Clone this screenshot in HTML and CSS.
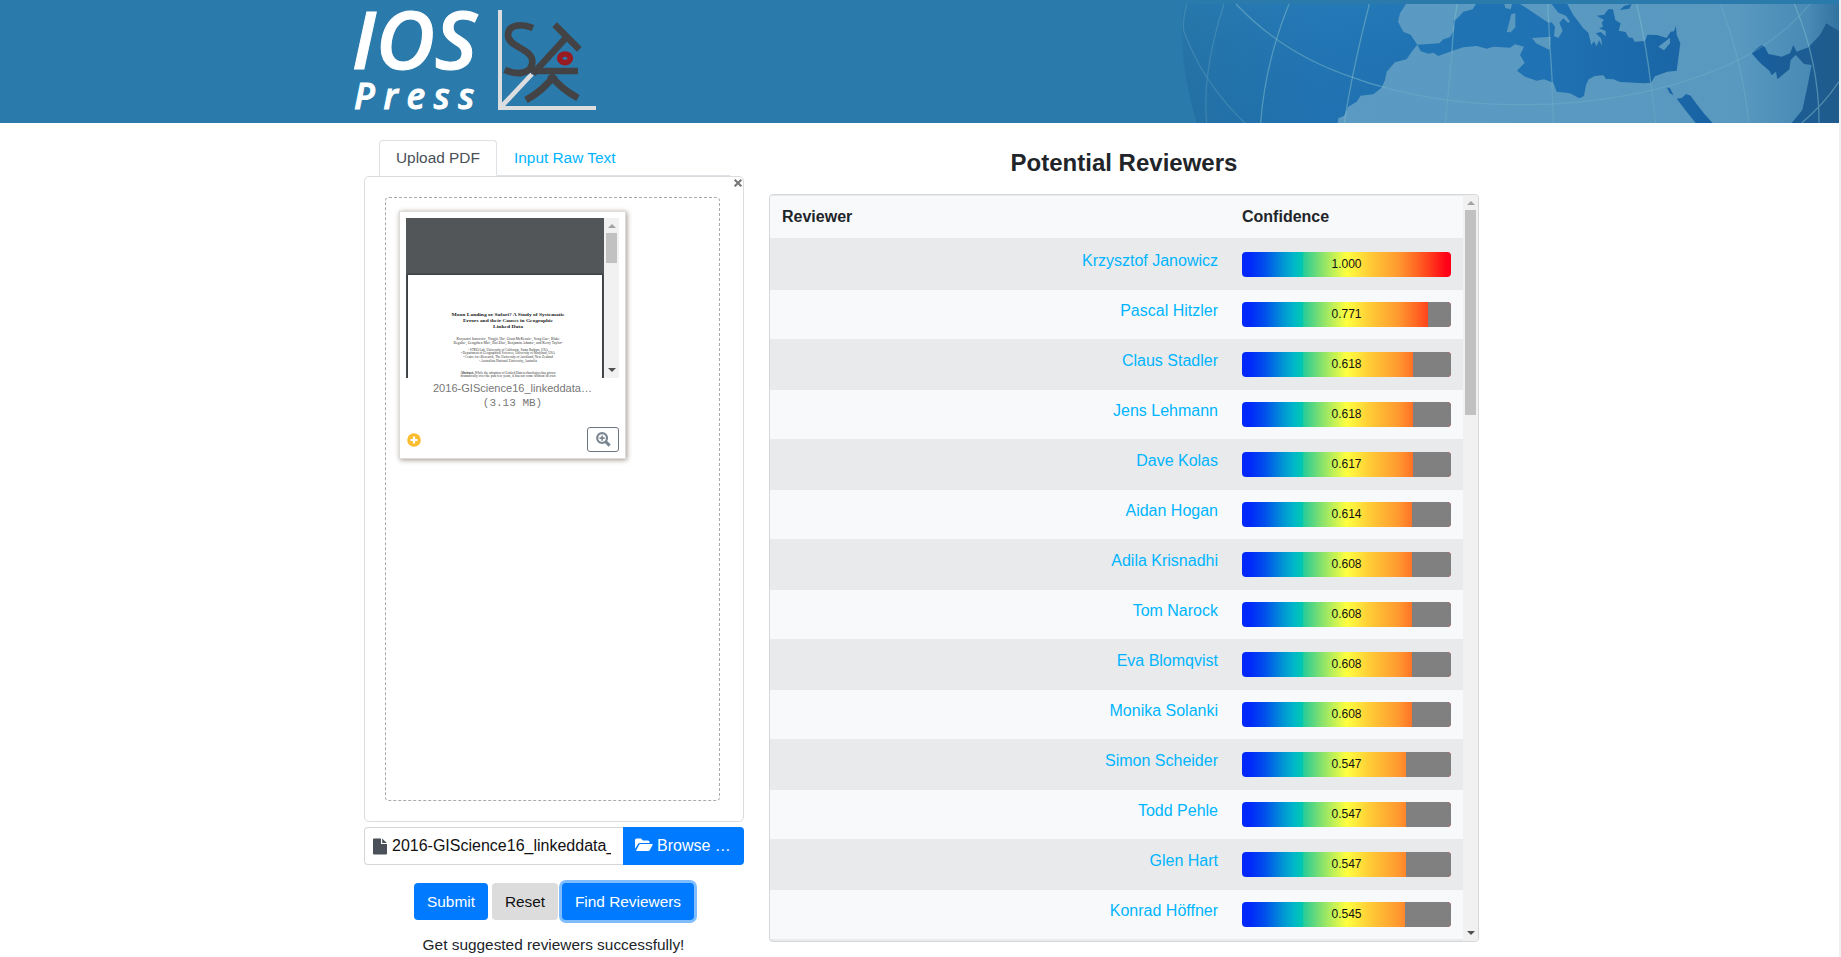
FILE: index.html
```
<!DOCTYPE html>
<html lang="en">
<head>
<meta charset="utf-8">
<title>Potential Reviewers</title>
<link rel="stylesheet" href="styles.css">
</head>
<body>
<div class="page">
<header class="banner">
  <svg class="logo" width="270" height="123" viewBox="0 0 810 369">
    <g class="brand">
      <text class="ios" x="35" y="206" textLength="376" lengthAdjust="spacingAndGlyphs">IOS</text>
      <text class="press" x="42" y="326" textLength="361" lengthAdjust="spacing">Press</text>
    </g>
    <g fill="none" stroke="#dcdddf" stroke-width="12">
      <path d="M480 30V324H768"/><path d="M484 320L576 222" stroke-width="14"/>
    </g>
    <g fill="none" stroke="#434345" stroke-width="20">
      <path d="M579 84C545 70 504 72 504 106C504 142 577 146 577 184C577 224 528 226 494 209"/>
      <path d="M644 74L718 148M680 111L579 221"/>
      <path d="M574 213H714"/><path stroke-width="21" d="M644 224C622 256 594 280 558 300M630 224C654 256 680 276 714 294"/>
    </g>
    <ellipse cx="675" cy="175" rx="16" ry="13" fill="none" stroke="#981b22" stroke-width="17"/>
  </svg>
  <svg class="map" width="657" height="123" viewBox="36 0 1971 369">
    <defs>
      <linearGradient id="sea" gradientUnits="userSpaceOnUse" x1="36" y1="0" x2="2007" y2="0">
        <stop offset="0" stop-color="#2774a5"/><stop offset=".09" stop-color="#2575ac"/><stop offset=".2" stop-color="#2376b3"/><stop offset=".55" stop-color="#1f72b3"/><stop offset=".87" stop-color="#175f9f"/><stop offset="1" stop-color="#205b8b"/>
      </linearGradient>
      <linearGradient id="land" gradientUnits="userSpaceOnUse" x1="500" y1="0" x2="2007" y2="0">
        <stop offset="0" stop-color="#5b9bc3"/><stop offset=".8" stop-color="#5999c0"/><stop offset=".94" stop-color="#488ab5"/><stop offset="1" stop-color="#32739f"/>
      </linearGradient>
      <linearGradient id="depth" x1="0" y1="0" x2="0" y2="1">
        <stop offset="0" stop-color="#2a85c3" stop-opacity=".2"/><stop offset="1" stop-color="#0b4f98" stop-opacity=".12"/>
      </linearGradient>
    </defs>
    <path fill="url(#sea)" d="M40 12H2007V369H80Q22 180 40 12Z"/>
    <path fill="url(#depth)" d="M40 12H2007V369H80Q22 180 40 12Z"/>
    <path fill="url(#land)" d="M708 12H2007V369H503L505 355L522 348L535 320L560 305L572 287L610 283L635 263L645 240L650 215L675 187L710 178L725 155L742 134L722 104L700 95L684 65L690 40Z"/>
    <path fill="url(#sea)" d="M742 134L808 130L820 118L840 112L852 90L850 62L862 55L880 35L908 28L918 12H1050L1075 28L1105 48L1135 68L1145 67L1155 80L1152 108L1165 114L1178 92L1168 68L1180 55L1194 68L1200 65L1188 47L1165 38L1145 12H1192L1210 45L1240 85L1255 98L1264 135L1272 124L1280 139L1287 121L1297 138L1293 115L1277 100L1292 96L1307 109L1307 93L1287 85L1299 80L1295 68L1302 60L1280 47L1302 44L1315 28L1329 28L1336 60L1352 70L1346 92L1367 96L1375 112L1388 114L1394 125L1425 123L1432 104L1462 105L1490 114L1502 95L1512 94L1518 78L1520 105L1531 130L1525 175L1520 212L1492 215L1455 229L1443 248L1425 250L1350 246L1330 238L1308 237L1300 226L1275 228L1256 238L1248 255L1242 288L1228 295L1200 280L1160 275L1150 248L1122 238L1100 242L1065 230L1041 212L1064 188L1050 165L1062 140L1035 133L1020 143L970 140L950 146L920 138L880 142L840 155L805 168L790 158L775 161L752 154Z"/>
    <g fill="url(#sea)">
      <path d="M1350 30L1362 18L1385 12L1378 26Z"/>
      <path d="M1490 262L1500 265L1511 286L1499 280Z"/>
      <path d="M1520 296L1535 294L1548 282L1562 287L1578 310L1604 343L1628 369H1577L1550 335Z"/>
      <path d="M1745 160L1758 148L1775 135L1785 142L1795 162L1835 170L1860 160L1870 135L1880 155L1915 142L1950 105L1969 70L1985 80L2007 92V369H1865L1897 330L1910 270L1925 195L1902 192L1877 165L1862 180L1858 208L1822 238L1818 215L1805 226L1798 212L1770 188Z"/>
    </g>
    <g fill="#5999c0">
      <path d="M1024 42L1036 40L1036 82L1022 97L1010 96L1017 70Z"/><path d="M1003 12H1026L1022 28L1006 24Z"/>
      <path d="M1086 114L1142 110L1139 150L1098 130Z"/><path d="M1465 140L1500 113L1500 130L1482 151Z"/>
    </g>
    <g fill="none" stroke="#82bccb" stroke-opacity=".5" stroke-width="4">
      <path stroke-opacity=".25" d="M50 12Q36 70 42 95Q100 250 225 369M162 12Q95 220 110 369"/>
      <path d="M357 12Q285 190 272 369M598 12Q545 220 523 369"/>
      <path d="M198 12C300 120 420 190 548 232Q595 250 645 263"/>
      <path stroke-opacity=".28" d="M645 263Q830 312 1020 314C1250 318 1500 280 1700 182Q1830 120 1920 12"/>
      <path d="M862 12Q848 80 846 160"/><path stroke-opacity=".25" d="M846 160L826 369M1146 250L1150 369M1442 248L1457 369"/>
      <path d="M1133 12Q1139 130 1147 250M1400 12Q1428 130 1442 248"/>
      <path stroke-opacity=".28" d="M1652 12Q1720 200 1736 369"/><path d="M1873 12Q1948 190 1947 369M1895 369Q1960 315 2007 245"/>
    </g>
  </svg>
</header>

<main class="content">
  <section class="upload">
    <nav class="tabs">
      <a class="tab tab-active">Upload PDF</a>
      <a class="tab">Input Raw Text</a>
    </nav>
    <div class="panel">
      <svg class="close" width="8" height="8" viewBox="0 0 7 7"><path d="M.6 .6L6.4 6.4M6.4 .6L.6 6.4" stroke="#777" stroke-width="1.8"/></svg>
      <div class="dropzone">
        <figure class="file">
          <div class="viewer">
            <div class="paper">
              <svg width="194" height="103" viewBox="0 0 194 103" text-anchor="middle">
                <g class="paper-title">
                  <text x="100" y="41" textLength="113" lengthAdjust="spacingAndGlyphs">Moon Landing or Safari? A Study of Systematic</text>
                  <text x="100" y="47" textLength="90" lengthAdjust="spacingAndGlyphs">Errors and their Causes in Geographic</text>
                  <text x="100" y="53" textLength="30" lengthAdjust="spacingAndGlyphs">Linked Data</text>
                </g>
                <g class="paper-text">
                  <text x="100" y="64.5" textLength="103" lengthAdjust="spacingAndGlyphs">Krzysztof Janowicz¹, Yingjie Hu², Grant McKenzie³, Song Gao¹, Blake</text>
                  <text x="100" y="68.5" textLength="109" lengthAdjust="spacingAndGlyphs">Regalia¹, Gengchen Mai¹, Rui Zhu¹, Benjamin Adams⁴, and Kerry Taylor⁵</text>
                  <text x="100" y="75.5" textLength="80" lengthAdjust="spacingAndGlyphs">¹ STKO Lab, University of California, Santa Barbara, USA</text>
                  <text x="100" y="79.2" textLength="94" lengthAdjust="spacingAndGlyphs">² Department of Geographical Sciences, University of Maryland, USA</text>
                  <text x="100" y="82.8" textLength="90" lengthAdjust="spacingAndGlyphs">³ Centre for eResearch, The University of Auckland, New Zealand</text>
                  <text x="100" y="86.5" textLength="58" lengthAdjust="spacingAndGlyphs">⁴ Australian National University, Australia</text>
                  <text x="100" y="98.5" textLength="95" lengthAdjust="spacingAndGlyphs"><tspan font-weight="bold">Abstract.</tspan> While the adoption of Linked Data technologies has grown</text>
                  <text x="100" y="102.3" textLength="95" lengthAdjust="spacingAndGlyphs">dramatically over the past few years, it has not come without its own</text>
                </g>
              </svg>
            </div>
            <div class="scrollbar"><i class="arrow up"></i><i class="thumb"></i><i class="arrow down"></i></div>
          </div>
          <figcaption class="caption">2016-GIScience16_linkeddata…</figcaption>
          <div class="size">(3.13 MB)</div>
          <div class="file-actions">
            <svg width="14" height="14" viewBox="0 0 14 14"><circle cx="7" cy="7" r="6.8" fill="#fdbb2f"/><path d="M7 3.4V10.6M3.4 7H10.6" stroke="#fff" stroke-width="2.2"/></svg>
            <span class="zoom"><svg width="15" height="15" viewBox="0 0 15 15" fill="none" stroke="#7a8590"><circle cx="6.1" cy="6.1" r="4.9" stroke-width="2.2"/><path d="M9.6 9.6L13.6 13.6" stroke-width="3"/><path d="M6.1 3.5V8.7M3.5 6.1H8.7" stroke-width="1.6"/></svg></span>
          </div>
        </figure>
      </div>
    </div>
    <div class="picker">
      <div class="filename">
        <svg width="14" height="17" viewBox="0 0 14 17" fill="#495057"><path d="M1 .5H8V6H14V15.5Q14 16.5 13 16.5H1Q0 16.5 0 15.5V1.5Q0 .5 1 .5ZM9.2 .5L13.8 5H9.2Z"/></svg>
        <span class="filename-text">2016-GIScience16_linkeddata_e</span>
      </div>
      <div class="browse">
        <svg width="18" height="14" viewBox="0 0 18 14" fill="#fff"><path d="M0 10.8V2Q0 .5 1.5 .5H6L8 2.5H13Q14.5 2.5 14.5 4V5H5Q3.6 5 3 6ZM1 13L4 7Q4.4 6 5.4 6H17Q18 6 17.6 7L15 11.8Q14.4 13 13.2 13Z"/></svg>
        <span>Browse …</span>
      </div>
    </div>
    <div class="buttons">
      <button class="btn">Submit</button>
      <button class="btn btn-reset">Reset</button>
      <button class="btn btn-find">Find Reviewers</button>
    </div>
    <p class="message">Get suggested reviewers successfully!</p>
  </section>

  <section class="results">
    <h1 class="title">Potential Reviewers</h1>
    <div class="table-card">
      <div class="table">
        <div class="head"><span>Reviewer</span><span class="head-conf">Confidence</span></div>
        <div id="rows"></div>
      </div>
      <div class="scrollbar tall"><i class="arrow up"></i><i class="thumb"></i><i class="arrow down"></i></div>
    </div>
  </section>
</main>
</div>
<script src="rows.js"></script>
</body>
</html>
```
FILE: rows.js
```
// name, confidence, filled width of the bar in px
const reviewers = [
  ["Krzysztof Janowicz", "1.000", 209], ["Pascal Hitzler", "0.771", 186],
  ["Claus Stadler", "0.618", 171], ["Jens Lehmann", "0.618", 171],
  ["Dave Kolas", "0.617", 171], ["Aidan Hogan", "0.614", 170],
  ["Adila Krisnadhi", "0.608", 170], ["Tom Narock", "0.608", 170],
  ["Eva Blomqvist", "0.608", 170], ["Monika Solanki", "0.608", 170],
  ["Simon Scheider", "0.547", 164], ["Todd Pehle", "0.547", 164],
  ["Glen Hart", "0.547", 164], ["Konrad Höffner", "0.545", 163]
];
document.getElementById("rows").innerHTML = reviewers.map(([name, score, width]) =>
  `<div class="row"><a class="name">${name}</a><div class="bar"><div class="rest" style="width:${209 - width}px"></div><span class="score">${score}</span></div></div>`
).join("");
```
FILE: styles.css
```
* { box-sizing: border-box; }
body { margin: 0; height: 957px; overflow: hidden; background: #f0f0f0; font-family: "Liberation Sans", Arial, sans-serif; font-size: 15.4px; line-height: 23px; color: #212529; }
.page { width: 1839px; height: 957px; background: #fff; }
.banner { height: 123px; background: #2a7aab; display: flex; justify-content: space-between; padding-left: 340px; }
.logo, .map { display: block; }
.brand { fill: #fff; font-family: "Open Sans", sans-serif; font-style: italic; font-weight: 600; stroke: #fff; stroke-width: 3; }
.ios { font-size: 238px; }
.press { font-size: 106px; }

.content { display: flex; align-items: flex-start; gap: 25px; padding-left: 364px; }
.upload { width: 380px; padding-top: 17px; }
.tabs { display: flex; margin: 0 14px 0 15px; height: 36px; border-bottom: 1px solid #dee2e6; }
.tab { height: 36px; padding: 5px 16px; border: 1px solid transparent; color: #00b5ff; white-space: nowrap; }
.tab-active { width: 118px; color: #495057; background: #fff; border-color: #dee2e6 #dee2e6 #fff; border-radius: 4px 4px 0 0; }
.panel { position: relative; height: 646px; border: 1px solid #dcdcdc; border-radius: 5px; padding: 20px 23px 20px 20px; }
.close { position: absolute; top: 2px; right: 1px; }
.dropzone { height: 604px; border: 1px dashed #aaa; border-radius: 4px; padding: 13px; }
.file { margin: 0; width: 227px; height: 248px; border: 1px solid #ddd; box-shadow: 1px 1px 5px 0 #a2958a; padding: 6px; display: flex; flex-direction: column; color: #777; font-size: 11.05px; text-align: center; background: #fff; }
.viewer { width: 213px; height: 160px; display: flex; background: #525659; flex: none; }
.paper { margin: 57px 2px 0; width: 194px; background: #fff; box-shadow: 0 0 2px 1px #34373a; clip-path: inset(-2px -2px 0); }
.paper svg { display: block; }
.paper-title { font: bold 4.8px "Liberation Serif", serif; fill: #222; }
.paper-text { font: 3.4px "Liberation Serif", serif; fill: #333; }
.scrollbar { width: 15px; background: #f1f1f1; display: flex; flex-direction: column; align-items: center; padding: 6px 0; }
.viewer .scrollbar { flex: none; }
.thumb { width: 11px; height: 30px; background: #c1c1c1; margin-top: 5px; }
.arrow { border: 4px solid transparent; }
.up { border-top: 0; border-bottom-color: #a3a3a3; }
.down { border-bottom: 0; border-top-color: #505050; margin-top: auto; }
.caption { line-height: 15px; margin-top: 3px; height: 15px; }
.size { font-family: "Liberation Mono", monospace; font-size: 11px; line-height: 14px; }
.file-actions { display: flex; justify-content: space-between; align-items: center; margin-top: 17px; padding-left: 1px; height: 25px; }
.zoom { width: 32px; height: 25px; border: 1px solid #6c757d; border-radius: 3px; display: flex; align-items: center; justify-content: center; }

.picker { display: flex; margin-top: 5px; height: 38px; font-size: 16px; line-height: 24px; color: #111; }
.filename { width: 259px; border: 1px solid #d4d6d8; border-right: 0; border-radius: 4px 0 0 4px; padding: 6px 12px 6px 8px; display: flex; align-items: center; gap: 5px; }
.filename svg { flex: none; margin-top: 1px; }
.filename-text { width: 219px; overflow: hidden; white-space: nowrap; }
.browse { width: 121px; background: #007bff; color: #fff; border-radius: 0 4px 4px 0; display: flex; align-items: center; gap: 4px; padding-left: 12px; white-space: nowrap; }
.browse svg { flex: none; margin-top: -2px; }
.buttons { display: flex; gap: 4px; margin: 18px 0 0 50px; }
.btn { width: 74px; height: 37px; padding: 0; border: 0; border-radius: 4px; background: #007bff; color: #fff; font: 15.4px/23px "Liberation Sans", Arial, sans-serif; white-space: nowrap; }
.btn-reset { width: 66px; background: #dcdcdc; color: #111; }
.btn-find { width: 132px; box-shadow: 0 0 0 3px #7fbdff; }
.message { margin: 13px 0 0; text-align: center; padding-right: 1px; line-height: 23px; }

.results { width: 710px; }
.title { margin: 23px 0 0; height: 48px; font-size: 24px; line-height: 34px; text-align: center; }
.table-card { height: 748px; display: flex; border: 1px solid #d5d7d9; border-radius: 4px; overflow: hidden; font-size: 16px; line-height: 24px; background: #e9eaec; }
.table { width: 693px; padding-top: 1px; flex: none; }
.head { height: 42px; background: #f8f9fb; display: flex; font-weight: bold; padding: 9px 0 0 12px; }
.head-conf { margin-left: auto; width: 221px; }
.row { height: 50px; border-top: 1px solid #e9eaec; background: #f8f9fb; display: flex; justify-content: flex-end; padding: 12px 12px 0 0; gap: 24px; }
.row:nth-child(odd) { background: #e9eaec; }
#rows { padding-top: 1px; background: #e9eaec; }
.name { color: #00b5ff; margin-top: -3px; }
.bar { width: 209px; height: 25px; border-radius: 4px; overflow: hidden; display: grid; justify-items: end; background: linear-gradient(90deg, #0028fa 4%, #0050ec 11%, #0098d4 20%, #00b8c8 25%, #00c8b0 29%, #28cc98 29.5%, #90e468 39%, #ffff40 50%, #ffc835 62%, #ff9830 75%, #ff6422 84%, #ff3c1c 90%, #ff0018 98%); }
.rest, .score { grid-area: 1 / 1; }
.rest { background: #808080; height: 25px; }
.score { justify-self: center; color: #111; font-size: 12px; line-height: 24px; }
.tall { width: 15px; flex: none; }
.tall .thumb { height: 205px; }
```
